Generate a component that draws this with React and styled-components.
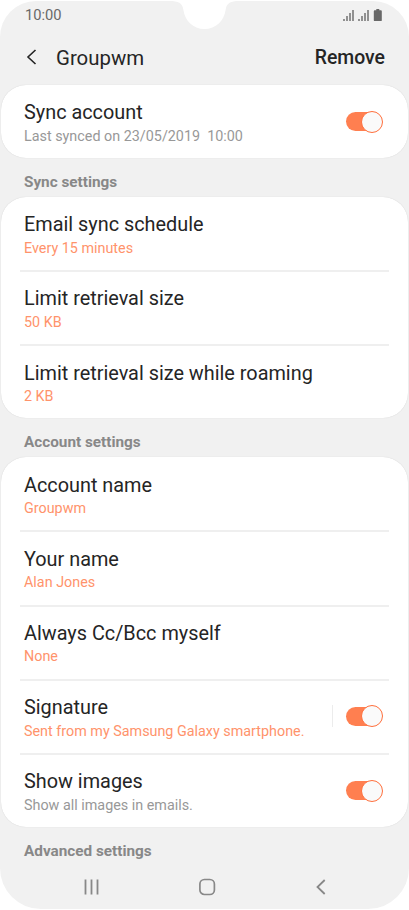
import styled, { createGlobalStyle, css } from 'styled-components';

const GlobalStyle = createGlobalStyle`
  * {
    box-sizing: border-box;
  }
  body {
    margin: 0;
    background: #fff;
    font-family: Roboto, sans-serif;
  }
`;

const Screen = styled.main(
  () => css`
    position: relative;
    width: 409px;
    height: 908px;
    margin-top: 1px;
    display: flex;
    flex-direction: column;
    overflow: hidden;
    background: #f1f1f1;
    border-radius: 36px 36px 41px 41px;
  `
);

const Notch = styled.svg(
  () => css`
    position: absolute;
    top: -1px;
    left: 170px;
  `
);

const StatusBar = styled.div(
  () => css`
    display: flex;
    align-items: center;
    justify-content: space-between;
    height: 29px;
    padding: 0 26px 1px 25px;
    font-size: 14.7px;
    line-height: 18px;
    color: #686868;
  `
);

const Header = styled.header(
  () => css`
    display: flex;
    align-items: center;
    height: 55px;
    padding: 0 24px 0 26px;
    color: #252525;
  `
);

const Title = styled.h1(
  () => css`
    flex-grow: 1;
    margin: 0 0 0 18px;
    font-size: 20.4px;
    font-weight: 400;
    line-height: 24px;
  `
);

const RemoveButton = styled.button(
  () => css`
    padding: 0;
    border: 0;
    margin-top: 1px;
    background: none;
    font: 500 19.4px/24px Roboto, sans-serif;
    color: #252525;
  `
);

const Card = styled.section(
  () => css`
    flex-shrink: 0;
    margin: 0 1px;
    background: #fff;
    border-radius: 25px;
    box-shadow: 0 0 1px rgba(0, 0, 0, 0.18);
  `
);

const Row = styled.div(
  () => css`
    display: flex;
    align-items: center;
    height: 73px;
    margin: 0 19px;
    padding: 0 7px 0 4px;

    & + & {
      height: 74.2px;
      padding-bottom: 1px;
      border-top: 2px solid #efefef;
    }
  `
);

const RowText = styled.div(
  () => css`
    flex-grow: 1;
    padding-top: 4px;
    white-space: pre;
  `
);

const Label = styled.div(
  () => css`
    font-size: 19.85px;
    line-height: 24px;
    color: #252525;
  `
);

const Value = styled.div(
  () => css`
    margin-top: 2.4px;
    font-size: 14.35px;
    line-height: 18px;
    color: ${({ $muted }) => ($muted ? '#989898' : '#ff936b')};
  `
);

const SectionTitle = styled.h2(
  () => css`
    flex-shrink: 0;
    height: 39px;
    margin: 0;
    padding: 6px 24px 0;
    font-size: 15.3px;
    font-weight: 700;
    line-height: 36.6px;
    color: #888;
  `
);

const SwitchDivider = styled.span(
  () => css`
    width: 1px;
    height: 22px;
    margin-right: 13px;
    background: #ececec;
  `
);

const Track = styled.span(
  () => css`
    display: flex;
    align-items: center;
    justify-content: flex-end;
    width: 36px;
    height: 19px;
    border-radius: 10px;
    background: #ff7f50;
  `
);

const Thumb = styled.span(
  () => css`
    flex-shrink: 0;
    width: 22px;
    height: 22px;
    margin-right: -1px;
    border: 1px solid #ff6f3c;
    border-radius: 50%;
    background: #fafafa;
  `
);

const NavBar = styled.nav(
  () => css`
    display: flex;
    align-items: center;
    justify-content: space-between;
    height: 32px;
    margin-top: 5px;
    padding: 0 82px 0 84px;
    color: #888;
  `
);

const Switch = () => (
  <Track role="switch" aria-checked="true">
    <Thumb />
  </Track>
);

const Setting = ({ label, value, muted, toggle, divided }) => (
  <Row>
    <RowText>
      <Label>{label}</Label>
      <Value $muted={muted}>{value}</Value>
    </RowText>
    {divided && <SwitchDivider />}
    {toggle && <Switch />}
  </Row>
);

const syncSettings = [
  { label: 'Email sync schedule', value: 'Every 15 minutes' },
  { label: 'Limit retrieval size', value: '50 KB' },
  { label: 'Limit retrieval size while roaming', value: '2 KB' },
];

const accountSettings = [
  { label: 'Account name', value: 'Groupwm' },
  { label: 'Your name', value: 'Alan Jones' },
  { label: 'Always Cc/Bcc myself', value: 'None' },
  {
    label: 'Signature',
    value: 'Sent from my Samsung Galaxy smartphone.',
    toggle: true,
    divided: true,
  },
  {
    label: 'Show images',
    value: 'Show all images in emails.',
    muted: true,
    toggle: true,
  },
];

const StatusIcons = () => (
  <svg width="40" height="13" viewBox="0 0 40 13" fill="#686868">
    {[0, 15].map((x) => (
      <g key={x} transform={`translate(${x} 0)`}>
        <rect x="0.3" y="10" width="1.4" height="2" />
        <rect x="3.3" y="7" width="1.4" height="5" />
        <rect x="6.3" y="4" width="1.4" height="8" />
        <rect x="9.3" y="1" width="1.4" height="11" />
      </g>
    ))}
    <path d="M33.3 0h3v1.3h1.6q.9 0 .9.9v9q0 .9-.9.9h-6.2q-.9 0-.9-.9v-9q0-.9.9-.9h1.6z" />
  </svg>
);

const App = () => (
  <>
    <GlobalStyle />
    <Screen>
      <Notch width="70" height="30" viewBox="0 0 70 30">
        <path
          d="M0 0V1C8 1 12.500 3 13.300 9.500C15 21 23 29 34.500 29S54 21 55.700 9.500C56.500 3 61 1 69 1V0Z"
          fill="#fff"
        />
      </Notch>
      <StatusBar>
        <span>10:00</span>
        <StatusIcons />
      </StatusBar>
      <Header>
        <svg width="12" height="18" viewBox="0 0 12 18" fill="none">
          <path d="M9.500 1L2 8L9.500 15" stroke="#252525" strokeWidth="1.600" />
        </svg>
        <Title>Groupwm</Title>
        <RemoveButton>Remove</RemoveButton>
      </Header>
      <Card>
        <Setting
          label="Sync account"
          value="Last synced on 23/05/2019  10:00"
          muted
          toggle
        />
      </Card>
      <SectionTitle>Sync settings</SectionTitle>
      <Card>
        {syncSettings.map((item) => (
          <Setting key={item.label} {...item} />
        ))}
      </Card>
      <SectionTitle>Account settings</SectionTitle>
      <Card>
        {accountSettings.map((item) => (
          <Setting key={item.label} {...item} />
        ))}
      </Card>
      <SectionTitle>Advanced settings</SectionTitle>
      <NavBar>
        <svg width="16" height="18" viewBox="0 0 16 18" fill="none" stroke="currentColor">
          <path d="M1.500 1.500V16.500M7.500 1.500V16.500M13.500 1.500V16.500" strokeWidth="1.800" />
        </svg>
        <svg width="18" height="18" viewBox="0 0 18 18" fill="none" stroke="currentColor">
          <rect x="0.900" y="1.500" width="14.500" height="15" rx="4.500" strokeWidth="1.700" />
        </svg>
        <svg width="12" height="18" viewBox="0 0 12 18" fill="none" stroke="currentColor">
          <path d="M9.700 2L2.500 9L9.700 16" strokeWidth="1.800" />
        </svg>
      </NavBar>
    </Screen>
  </>
);

export default App;
